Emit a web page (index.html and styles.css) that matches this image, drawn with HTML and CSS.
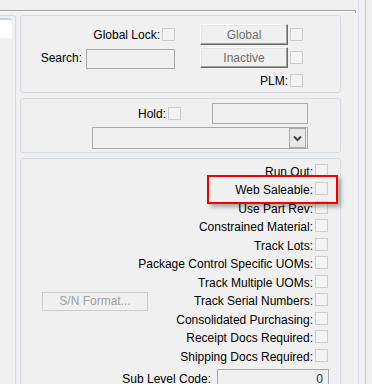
FILE: index.html
```html
<!DOCTYPE html>
<html lang="en">
<head>
  <meta charset="UTF-8">
  <title>Part Settings</title>
  <link rel="stylesheet" href="styles.css">
</head>
<body>
  <div class="window">
    <div class="main">
      <div class="rule"></div>
      <div class="content">
        <div class="side"><div class="side-doc"></div></div>
        <div class="groups">
          <div class="group group-flags">
            <div class="cell"><span>Global Lock:</span><span class="check"></span></div>
            <div class="cell"><span class="btn3d">Global</span><span class="check"></span></div>
            <div class="cell"><span>Search:</span><span class="field search"></span></div>
            <div class="cell"><span class="btn3d">Inactive</span><span class="check"></span></div>
            <div class="cell"></div>
            <div class="cell"><span>PLM:</span><span class="check"></span></div>
          </div>

          <div class="group group-hold">
            <div class="hold-row">
              <span>Hold:</span><span class="check"></span>
              <span class="field hold-field"></span>
            </div>
            <div class="hold-row">
              <div class="combo">
                <span class="combo-btn">
                  <svg width="15" height="18" viewBox="0 0 15 18"><polyline points="4,7.5 7.5,11 11,7.5" fill="none" stroke="#444" stroke-width="2"/></svg>
                </span>
              </div>
            </div>
          </div>

          <div class="group group-options">
            <div class="opt"><span>Run Out:</span><span class="check"></span></div>
            <div class="opt"><span>Web Saleable:</span><span class="check"></span></div>
            <div class="opt"><span>Use Part Rev:</span><span class="check"></span></div>
            <div class="opt"><span>Constrained Material:</span><span class="check"></span></div>
            <div class="opt"><span>Track Lots:</span><span class="check"></span></div>
            <div class="opt"><span>Package Control Specific UOMs:</span><span class="check"></span></div>
            <div class="opt"><span>Track Multiple UOMs:</span><span class="check"></span></div>
            <div class="opt opt-split">
              <span class="btn-off">S/N Format...</span>
              <span class="opt-pair"><span>Track Serial Numbers:</span><span class="check"></span></span>
            </div>
            <div class="opt"><span>Consolidated Purchasing:</span><span class="check"></span></div>
            <div class="opt"><span>Receipt Docs Required:</span><span class="check"></span></div>
            <div class="opt"><span>Shipping Docs Required:</span><span class="check"></span></div>
            <div class="sub-row">
              <span>Sub Level Code:</span><span class="field sub-field">0</span>
            </div>
            <div class="highlight"></div>
          </div>
        </div>
      </div>
    </div>
    <div class="rail rail-light"></div>
    <div class="rail rail-dark"></div>
  </div>
</body>
</html>
```

FILE: styles.css
```css
body {
  margin: 0;
  background: #f0f0f0;
  font-family: 'Liberation Sans', Arial, sans-serif;
  font-size: 12px;
  line-height: 14px;
  color: #000;
  overflow: hidden;
}
.window {
  display: flex;
  height: 384px;
}
.main {
  width: 358px;
}
.rail {
  width: 1px;
  height: 100%;
}
.rail-light {
  background: #d7dee6;
}
.rail-dark {
  background: #c8c8c8;
  margin-left: 6px;
}
.rule {
  position: relative;
  width: 356px;
  margin-top: 10px;
  border-top: 1px solid #a0a0a0;
  border-bottom: 1px solid #fff;
}
.rule::after {
  content: "";
  position: absolute;
  right: 0;
  top: -1px;
  width: 1px;
  height: 3px;
  background: #a0a0a0;
}
.content {
  display: flex;
  padding-top: 3px;
}
.side {
  width: 16px;
  height: 400px;
  border-top: 1px solid #d3dce5;
  border-right: 1px solid #d3dce5;
  border-top-right-radius: 3px;
  box-sizing: border-box;
}
.side-doc {
  width: 12px;
  height: 20px;
  margin-top: 2px;
  background: #fff;
  border-top: 2px solid #c4d3e2;
  border-top-right-radius: 3px;
  box-sizing: border-box;
}
.groups {
  display: flex;
  flex-direction: column;
  gap: 5px;
  width: 321px;
  margin-left: 4px;
}
.group {
  border: 1px solid #d3dce5;
  border-radius: 3px;
  box-sizing: border-box;
}

/* shared controls */
.check {
  display: inline-block;
  width: 13px;
  height: 13px;
  border: 1px solid #cccccc;
  background: #f3f3f3;
  box-sizing: border-box;
  flex: none;
}
.field {
  display: inline-block;
  border: 1px solid #a9a9a9;
  background: #f0f0f0;
  box-sizing: border-box;
}
.btn3d {
  display: flex;
  align-items: center;
  justify-content: center;
  width: 88px;
  height: 21px;
  box-sizing: border-box;
  border: 1px solid;
  border-color: #fff #696969 #696969 #fff;
  box-shadow: inset -1px -1px #a0a0a0, inset 1px 1px #e3e3e3;
  background: #f0f0f0;
  color: #6d6d6d;
}

/* top group */
.group-flags {
  display: grid;
  grid-template-columns: 154px 103px;
  grid-template-rows: 21px 21px 21px;
  column-gap: 25px;
  row-gap: 2px;
  padding: 8px 0 1px;
}
.cell {
  display: flex;
  justify-content: flex-end;
  align-items: center;
  gap: 2px;
}
.search {
  width: 89px;
  height: 20px;
  margin-left: 2px;
  margin-top: 2px;
}

/* hold group */
.group-hold {
  padding: 4px 32px 3px 0;
}
.hold-row {
  display: flex;
  justify-content: flex-end;
  align-items: center;
  gap: 2px;
}
.hold-row + .hold-row {
  margin-top: 3px;
}
.hold-field {
  width: 96px;
  height: 21px;
  margin-left: 29px;
}
.combo {
  display: flex;
  justify-content: flex-end;
  align-items: center;
  width: 216px;
  height: 22px;
  padding-right: 1px;
  border: 1px solid #a9a9a9;
  background: #f0f0f0;
  box-sizing: border-box;
}
.combo-btn {
  display: flex;
  width: 17px;
  height: 20px;
  align-items: center;
  justify-content: center;
  border: 1px solid #a9a9a9;
  background: #e8e8e8;
  box-sizing: border-box;
}

/* options group */
.group-options {
  position: relative;
  flex: 1;
  padding: 2px 12px 0 21px;
}
.opt {
  display: flex;
  justify-content: flex-end;
  align-items: center;
  gap: 2px;
  height: 18.5px;
}
.opt > span:first-child,
.opt-pair > span:first-child {
  margin-top: 3px;
}
.opt-split {
  justify-content: space-between;
}
.opt-split > .btn-off {
  margin-top: 0;
}
.opt-pair {
  display: flex;
  align-items: center;
  gap: 2px;
}
.btn-off {
  display: flex;
  align-items: center;
  justify-content: center;
  width: 106px;
  height: 19px;
  border: 1px solid #cccccc;
  background: #f0f0f0;
  color: #a0a0a0;
  box-sizing: border-box;
}
.sub-row {
  display: flex;
  justify-content: flex-end;
  align-items: center;
  gap: 6px;
  margin-top: 4px;
  margin-right: -1px;
}
.sub-field {
  width: 112px;
  height: 21px;
  padding-right: 5px;
  text-align: right;
  line-height: 19px;
  color: #1f2a4a;
}
.highlight {
  position: absolute;
  left: 186px;
  top: 16px;
  width: 131px;
  height: 29px;
  border: 2px solid #f00000;
  box-sizing: border-box;
  box-shadow: 3px 3px 4px rgba(0, 0, 0, 0.3);
}
```
